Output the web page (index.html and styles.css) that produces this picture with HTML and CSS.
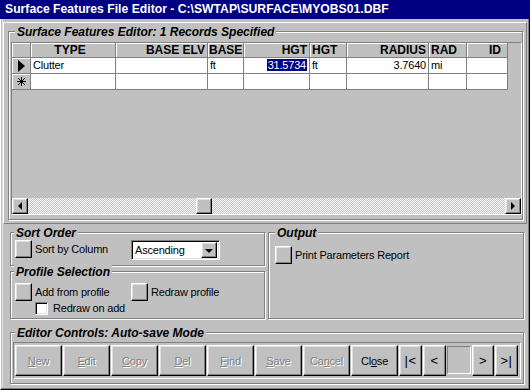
FILE: index.html
```html
<!DOCTYPE html>
<html lang="en">
<head>
    <meta charset="UTF-8">
    <title>Surface Features File Editor</title>
    <link rel="stylesheet" href="styles.css">
</head>
<body>
    <div class="window">
        <div class="titlebar">Surface Features File Editor - C:\SWTAP\SURFACE\MYOBS01.DBF</div>

        <div class="client">
            <!-- Records grid -->
            <div class="top-panel">
                <div class="group grid-group">
                    <span class="group-label">Surface Features Editor: 1 Records Specified</span>
                    <div class="grid">
                        <div class="grid-body">
                            <div class="grid-row grid-head">
                                <div class="cell rh"></div>
                                <div class="cell hd center">TYPE</div>
                                <div class="cell hd right">BASE ELV</div>
                                <div class="cell hd tight">BASE</div>
                                <div class="cell hd right">HGT</div>
                                <div class="cell hd">HGT</div>
                                <div class="cell hd right">RADIUS</div>
                                <div class="cell hd">RAD</div>
                                <div class="cell hd right id">ID</div>
                            </div>
                            <div class="grid-row">
                                <div class="cell rh"><span class="cur-arrow"></span></div>
                                <div class="cell">Clutter</div>
                                <div class="cell"></div>
                                <div class="cell">ft</div>
                                <div class="cell right"><span class="sel">31.5734</span></div>
                                <div class="cell">ft</div>
                                <div class="cell right">3.7640</div>
                                <div class="cell">mi</div>
                                <div class="cell"></div>
                            </div>
                            <div class="grid-row">
                                <div class="cell rh">
                                    <svg width="9" height="9" viewBox="0 0 9 9">
                                        <path d="M4.5 0V9M0 4.5H9M1 1L8 8M8 1L1 8" stroke="#000" stroke-width="1" fill="none"/>
                                    </svg>
                                </div>
                                <div class="cell"></div>
                                <div class="cell"></div>
                                <div class="cell"></div>
                                <div class="cell"></div>
                                <div class="cell"></div>
                                <div class="cell"></div>
                                <div class="cell"></div>
                                <div class="cell"></div>
                            </div>
                        </div>
                        <div class="hscroll">
                            <div class="raised sb-btn"><span class="arrow-left"></span></div>
                            <div class="sb-track"><div class="raised sb-thumb"></div></div>
                            <div class="raised sb-btn"><span class="arrow-right"></span></div>
                        </div>
                    </div>
                </div>
            </div>

            <div class="lower">
                <div class="left-col">
                    <div class="group sort-group">
                        <span class="group-label">Sort Order</span>
                        <div class="opt-row">
                            <div class="raised square"></div>
                            <span class="opt-label sort-label">Sort by Column</span>
                            <div class="combo">
                                <span class="combo-text">Ascending</span>
                                <div class="raised combo-btn"><span class="arrow-down"></span></div>
                            </div>
                        </div>
                    </div>
                    <div class="group profile-group">
                        <span class="group-label">Profile Selection</span>
                        <div class="opt-row">
                            <div class="raised square"></div>
                            <span class="opt-label add-label">Add from profile</span>
                            <div class="raised square"></div>
                            <span class="opt-label">Redraw profile</span>
                        </div>
                        <div class="check-row">
                            <div class="checkbox"></div>
                            <span class="opt-label">Redraw on add</span>
                        </div>
                    </div>
                </div>
                <div class="group output-group">
                    <span class="group-label">Output</span>
                    <div class="opt-row">
                        <div class="raised square"></div>
                        <span class="opt-label">Print Parameters Report</span>
                    </div>
                </div>
            </div>

            <!-- Editor buttons -->
            <div class="group editor-group">
                <span class="group-label">Editor Controls: Auto-save Mode</span>
                <div class="btn-panel">
                    <div class="raised btn disabled"><u>N</u>ew</div>
                    <div class="raised btn disabled"><u>E</u>dit</div>
                    <div class="raised btn disabled"><u>C</u>opy</div>
                    <div class="raised btn disabled"><u>D</u>el</div>
                    <div class="raised btn disabled"><u>F</u>ind</div>
                    <div class="raised btn disabled"><u>S</u>ave</div>
                    <div class="raised btn disabled">Ca<u>n</u>cel</div>
                    <div class="raised btn">Cl<u>o</u>se</div>
                    <div class="raised btn nav">|&lt;</div>
                    <div class="raised btn nav">&lt;</div>
                    <div class="rec-field"></div>
                    <div class="raised btn nav narrow">&gt;</div>
                    <div class="raised btn nav">&gt;|</div>
                </div>
            </div>
        </div>
    </div>
</body>
</html>
```

FILE: styles.css
```css
* {
    box-sizing: border-box;
}

body {
    margin: 0;
    background: #c0c0c0;
    font-family: "Liberation Sans", Arial, sans-serif;
    font-size: 11px;
    letter-spacing: -0.2px;
    color: #000;
}

.window {
    width: 530px;
    height: 390px;
    display: flex;
    flex-direction: column;
    overflow: hidden;
}

.titlebar {
    height: 19px;
    line-height: 19px;
    padding-left: 5px;
    background: #000080;
    color: #fff;
    font-weight: bold;
    font-size: 12.2px;
    letter-spacing: 0;
    white-space: nowrap;
}

.client {
    flex: 1;
    padding: 3px 2px 0 2px;
    border-left: 1px solid #fff;
    border-right: 1px solid #000;
    border-bottom: 1px solid #000;
    box-shadow: inset -1px -1px 0 #808080, inset 1px 0 0 #c0c0c0, inset 2px 0 0 #dfdfdf;
}

/* shared 3D pieces */
.raised {
    background: #c0c0c0;
    border: 1px solid;
    border-color: #fff #000 #000 #fff;
    box-shadow: inset -1px -1px 0 #808080, inset 1px 1px 0 #dfdfdf;
}

.group {
    position: relative;
    border: 1px solid #808080;
    box-shadow: 1px 1px 0 #fff, inset 1px 1px 0 #fff;
}

.group-label {
    position: absolute;
    top: -7px;
    left: 3px;
    padding: 0 2px;
    background: #c0c0c0;
    font-weight: bold;
    font-style: italic;
    font-size: 12px;
    letter-spacing: 0;
    line-height: 14px;
    white-space: nowrap;
}

/* top panel with the grid */
.top-panel {
    border: 1px solid;
    border-color: #fff #808080 #808080 #fff;
    padding: 8px 3px 3px 4px;
}

.grid-group {
    padding: 10px 0 4px 2px;
}

.grid-group .group-label {
    left: 6px;
}

.grid {
    height: 173px;
    display: flex;
    flex-direction: column;
    border: 1px solid;
    border-color: #808080 #fff #fff #808080;
}

.grid-body {
    flex: 1;
    background: #c0c0c0;
}

.grid-row {
    display: grid;
    grid-template-columns: 19px 85px 92px 36px 66px 37px 82px 38px 41px;
    height: 16px;
}

.grid-head {
    height: 15px;
}

.cell {
    background: #fff;
    border-right: 1px solid #808080;
    border-bottom: 1px solid #808080;
    padding: 0 2px;
    line-height: 15px;
    white-space: nowrap;
    overflow: hidden;
}

.cell.rh,
.cell.hd {
    background: #c0c0c0;
    box-shadow: inset 1px 1px 0 #fff;
}

.cell.rh {
    display: flex;
    align-items: center;
    justify-content: center;
    padding: 0;
}

.cell.hd {
    font-weight: bold;
    font-size: 12px;
    letter-spacing: 0;
    line-height: 14px;
}

.cell.tight {
    padding: 0 0 0 1px;
}

.center {
    text-align: center;
    padding-right: 8px;
}

.right {
    text-align: right;
}

.cell.id {
    padding-right: 6px;
}

.cur-arrow {
    width: 0;
    height: 0;
    border-left: 7px solid #000;
    border-top: 6px solid transparent;
    border-bottom: 6px solid transparent;
    margin-left: 1px;
}

.sel {
    background: #000080;
    color: #fff;
    padding: 0 1px;
}

.hscroll {
    height: 16px;
    display: flex;
}

.sb-btn {
    width: 16px;
    height: 16px;
    display: flex;
    align-items: center;
    justify-content: center;
}

.sb-track {
    flex: 1;
    background: repeating-conic-gradient(#c0c0c0 0 25%, #fff 0 50%) 0 0 / 2px 2px;
}

.sb-thumb {
    width: 16px;
    height: 16px;
    margin-left: 168px;
}

.arrow-left {
    border-right: 4px solid #000;
    border-top: 4px solid transparent;
    border-bottom: 4px solid transparent;
}

.arrow-right {
    border-left: 4px solid #000;
    border-top: 4px solid transparent;
    border-bottom: 4px solid transparent;
}

.arrow-down {
    border-top: 4px solid #000;
    border-left: 4px solid transparent;
    border-right: 4px solid transparent;
    margin-top: 1px;
}

/* lower option groups */
.lower {
    display: flex;
    gap: 3px;
    margin: 8px 3px 0 7px;
}

.left-col {
    width: 255px;
    display: flex;
    flex-direction: column;
    gap: 5px;
}

.sort-group {
    height: 34px;
    padding: 7px 0 0 4px;
}

.profile-group {
    height: 48px;
    padding: 11px 0 0 4px;
}

.output-group {
    flex: 1;
    padding: 13px 0 0 6px;
}

.output-group .group-label {
    left: 6px;
}

.opt-row {
    display: flex;
    align-items: flex-start;
}

.square {
    width: 17px;
    height: 18px;
    flex: none;
}

.opt-label {
    padding-left: 3px;
    line-height: 18px;
    white-space: nowrap;
}

.sort-label,
.add-label {
    width: 99px;
}

.combo {
    width: 89px;
    height: 20px;
    display: flex;
    justify-content: space-between;
    align-items: center;
    background: #fff;
    border: 1px solid;
    border-color: #808080 #fff #fff #808080;
    box-shadow: inset 1px 1px 0 #000, inset -1px -1px 0 #dfdfdf;
    padding: 2px 2px 2px 3px;
}

.combo-text {
    line-height: 14px;
}

.combo-btn {
    width: 16px;
    height: 16px;
    display: flex;
    align-items: center;
    justify-content: center;
}

.check-row {
    display: flex;
    align-items: center;
    margin: 1px 0 0 20px;
}

.checkbox {
    width: 13px;
    height: 13px;
    background: #fff;
    border: 1px solid;
    border-color: #808080 #fff #fff #808080;
    box-shadow: inset 1px 1px 0 #000, inset -1px -1px 0 #dfdfdf;
}

.check-row .opt-label {
    padding-left: 5px;
    line-height: 13px;
}

/* editor controls */
.editor-group {
    margin: 13px 3px 0 7px;
    height: 52px;
    padding: 9px 2px 0 2px;
}

.editor-group .group-label {
    left: 4px;
}

.btn-panel {
    display: flex;
    gap: 1px;
    padding: 2px 1px;
    border: 1px solid;
    border-color: #808080 #fff #fff #808080;
}

.btn {
    width: 47px;
    height: 31px;
    display: flex;
    align-items: center;
    justify-content: center;
}

.btn.disabled {
    color: #808080;
    text-shadow: 1px 1px 0 #fff;
}

.btn.nav {
    width: 23px;
    font-size: 13px;
    letter-spacing: 0.5px;
}

.btn.narrow {
    width: 22px;
}

.rec-field {
    width: 24px;
    height: 28px;
    margin-top: 1px;
    border: 1px solid;
    border-color: #808080 #fff #fff #808080;
}
```
